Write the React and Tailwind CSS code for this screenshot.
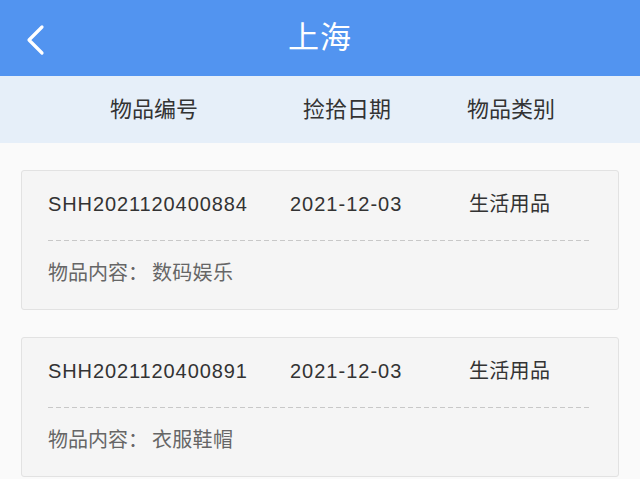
import React from 'react';

const items = [
  { code: 'SHH2021120400884', date: '2021-12-03', type: '生活用品', content: '数码娱乐' },
  { code: 'SHH2021120400891', date: '2021-12-03', type: '生活用品', content: '衣服鞋帽' },
];

const font = { fontFamily: '"Liberation Sans", "Noto Sans CJK SC", sans-serif' };

const App = () => {
  return (
    <div className="min-h-screen bg-[#fafafa]" style={font}>
      {/* Header */}
      <header className="h-[76px] bg-[#5294f0] flex items-center relative">
        <button className="absolute left-[22px] top-[22px] w-[26px] h-[36px] flex items-center justify-center">
          <svg width="22" height="32" viewBox="0 0 22 32" fill="none">
            <path d="M18 3 L5 16 L18 29" stroke="white" strokeWidth="3.2" strokeLinecap="round" strokeLinejoin="round" />
          </svg>
        </button>
        <h1 className="flex-1 text-center text-white text-[31px] tracking-[1px] leading-none pb-[2px]">上海</h1>
      </header>

      {/* Column titles */}
      <div className="h-[67px] bg-[#e6eff9] flex items-center text-[#333] text-[22px]">
        <div className="w-[110px]" />
        <div className="w-[193px]">物品编号</div>
        <div className="w-[164px]">捡拾日期</div>
        <div>物品类别</div>
      </div>

      {/* List */}
      <main className="px-[21px] pt-[27px] space-y-[27px]">
        {items.map((it) => (
          <div key={it.code} className="h-[140px] bg-[#f5f5f5] border border-[#e2e2e2] rounded-[3px] px-[26px] pt-[21px]">
            <div className="flex items-center h-[24px] text-[20px] text-[#333]">
              <span className="w-[242px] tracking-[0.9px]">{it.code}</span>
              <span className="w-[179px] tracking-[1px]">{it.date}</span>
              <span className="tracking-[0.3px]">{it.type}</span>
            </div>
            <div className="mt-[24px] h-px bg-[repeating-linear-gradient(90deg,#c8c8c8_0_5px,transparent_5px_8px)]" />
            <div className="mt-[20px] h-[24px] flex items-center text-[20px] text-[#666]">
              <span>物品内容：</span>
              <span className="ml-[4px] tracking-[0.3px]">{it.content}</span>
            </div>
          </div>
        ))}
      </main>
    </div>
  );
};

export default App;
